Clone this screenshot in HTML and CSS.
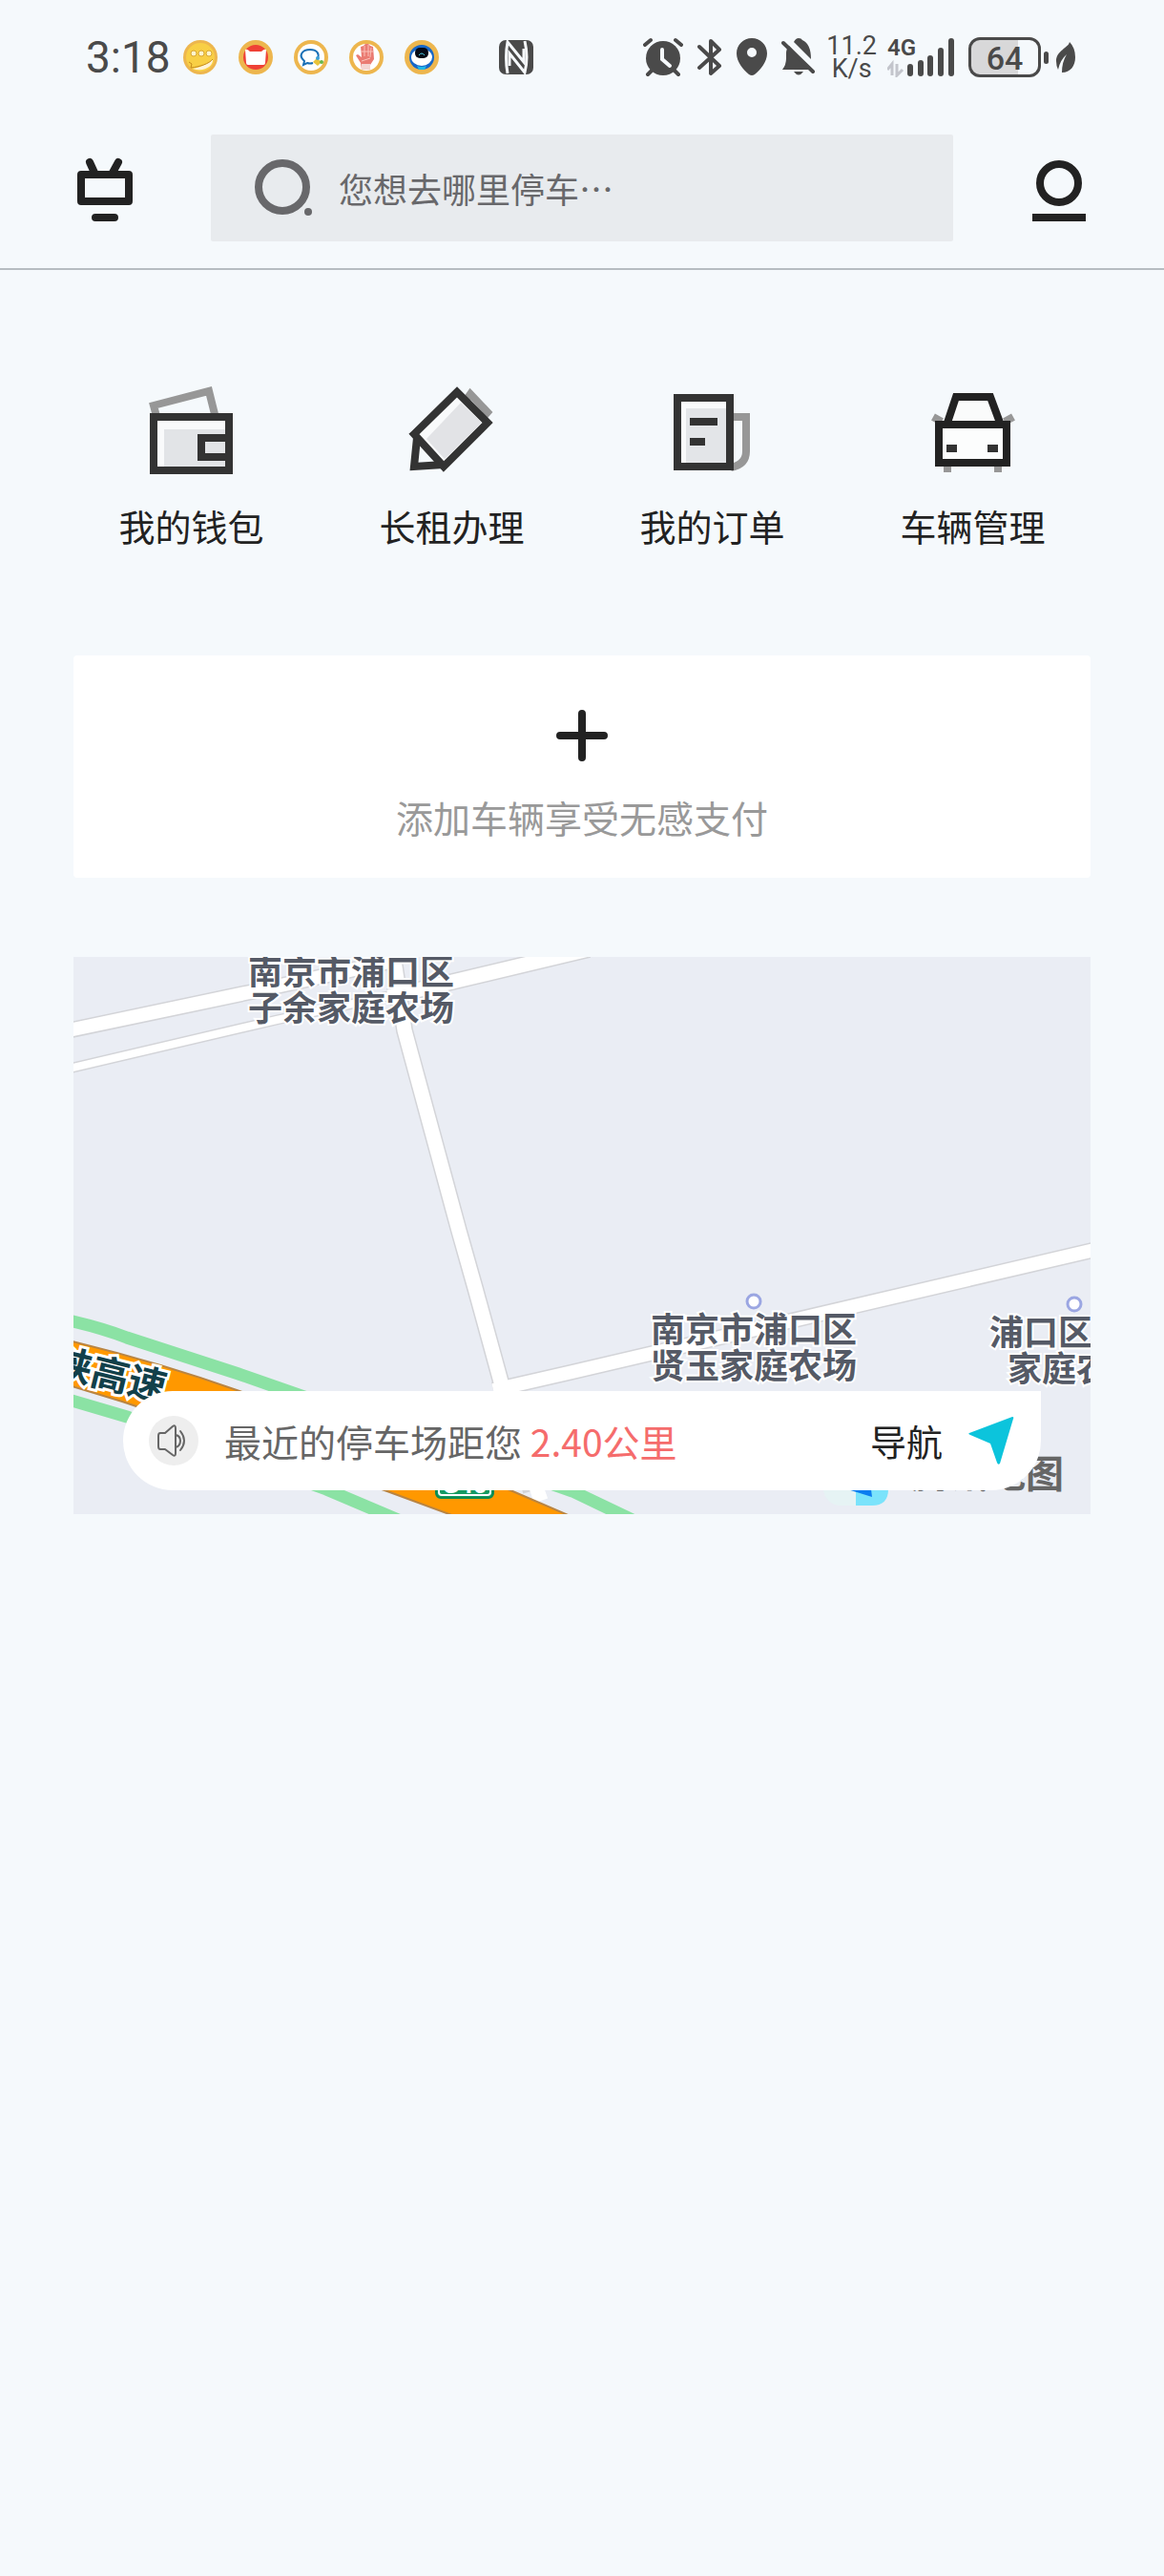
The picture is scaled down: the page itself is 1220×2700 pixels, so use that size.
FILE: index.html
```
<!DOCTYPE html>
<html lang="zh-CN">
<head>
    <meta charset="UTF-8">
    <meta name="viewport" content="width=device-width, initial-scale=1.0">
    <title>停车</title>
    <link rel="stylesheet" href="styles.css">
</head>
<body>
    <div class="status">
        <span class="time">3:18</span>
        <div class="notices">
            <svg width="36" height="36" viewBox="0 0 36 36">
                <circle cx="18" cy="18" r="18" fill="#edb64e"/>
                <circle cx="18" cy="18" r="15" fill="#f8cf45"/>
                <path d="M10 30C20 28 27 24 31 20C32 27 22 34 10 30Z" fill="#fff3d8"/>
                <path d="M6 23L9 25L8 29C17 28 27 25 31 20" fill="none" stroke="#c58a1c" stroke-width="1"/>
                <g fill="#fff6cc" stroke="#d9a632" stroke-width="1"><circle cx="11" cy="14" r="3"/><circle cx="19" cy="14" r="3"/><circle cx="27" cy="14" r="3"/></g>
            </svg>
            <svg width="36" height="36" viewBox="0 0 36 36">
                <circle cx="18" cy="18" r="18" fill="#edb64e"/>
                <circle cx="18" cy="18" r="13" fill="#ef4136"/>
                <path d="M7 10Q9 9 12 12H24Q27 9 29 10L28 24Q28 26 26 26H10Q8 26 8 24Z" fill="#fff"/>
            </svg>
            <svg width="36" height="36" viewBox="0 0 36 36">
                <circle cx="18" cy="18" r="18" fill="#edb64e"/>
                <circle cx="18" cy="18" r="14" fill="#fff"/>
                <path d="M20 24Q17 25 14 24L10 26L11 22C4 16 9 10 17 10C24 10 27 14 25 19" fill="none" stroke="#1a6fb5" stroke-width="2"/>
                <path d="M24 19L29 23L25 27L20 23Z" fill="#e9c33b"/>
                <circle cx="25" cy="19" r="2" fill="#3aa0d8"/><circle cx="29" cy="23" r="2" fill="#67b74b"/>
            </svg>
            <svg width="36" height="36" viewBox="0 0 36 36">
                <circle cx="18" cy="18" r="18" fill="#edb64e"/>
                <circle cx="18" cy="18" r="14" fill="#fff"/>
                <path d="M13 31L12 24L7 16L9 15L13 18L12 7L15 6L17 4L20 4L22 6L25 7L26 20L22 26L22 31Z" fill="#ea7b72"/>
                <path d="M16 6V17M20 5V17M23 8L22 18M12 12H25M13 22L22 19" stroke="#fbc1b8" stroke-width="1" fill="none"/>
                <path d="M13 25H22V31H13Z" fill="#f4d6d2"/>
            </svg>
            <svg width="36" height="36" viewBox="0 0 36 36">
                <circle cx="18" cy="18" r="18" fill="#edb64e"/>
                <circle cx="18" cy="18" r="13" fill="#1767c9"/>
                <ellipse cx="18" cy="18" rx="11" ry="9" fill="#fff"/>
                <rect x="11" y="8" width="14" height="11" rx="5" fill="#050a18"/>
                <path d="M15 16Q18 12 21 16" fill="none" stroke="#4fd0e8" stroke-width="1"/>
                <path d="M13 27Q18 29 23 27L21 31H15Z" fill="#20b8e8"/>
            </svg>
        </div>
        <svg class="nfc" width="36" height="36" viewBox="0 0 36 36">
            <rect width="36" height="36" rx="7" fill="#4a4a4a"/>
            <path d="M9 35Q6 18 9 2L26 23V9" fill="none" stroke="#f5f8fb" stroke-width="3"/>
            <path d="M27 1Q31 18 27 34L11 14V27" fill="none" stroke="#f5f8fb" stroke-width="3"/>
        </svg>
        <div class="signals">
            <svg width="42" height="42" viewBox="0 0 42 42">
                <g stroke="#4a4a4a" stroke-width="4" stroke-linecap="round">
                    <path d="M2 8L8 3M40 8L34 3M10 34L5 39M32 34L37 39"/>
                </g>
                <circle cx="21" cy="22" r="18" fill="#4a4a4a"/>
                <path d="M20 13V23L28 30" fill="none" stroke="#f5f8fb" stroke-width="4" stroke-linecap="round"/>
            </svg>
            <svg width="26" height="42" viewBox="0 0 26 42">
                <path d="M2 10L23 30L14 38V4L23 13L2 32" fill="none" stroke="#4a4a4a" stroke-width="4" stroke-linecap="round" stroke-linejoin="round"/>
            </svg>
            <svg width="32" height="42" viewBox="0 0 32 42">
                <path fill-rule="evenodd" d="M16 1C7 1 0 8 0 17C0 26 7 34 13 39Q16 41 19 39C25 34 32 26 32 17C32 8 25 1 16 1ZM16 11A5 5 0 1 1 16 21A5 5 0 1 1 16 11Z" fill="#4a4a4a"/>
            </svg>
            <svg width="36" height="42" viewBox="0 0 36 42">
                <path d="M1 34Q5 29 5 22V17Q5 12 8 9L31 34ZM13 5Q15 1 18 1Q21 1 22 3Q31 7 31 23ZM13 36H23Q18 43 13 36Z" fill="#4a4a4a"/>
                <path d="M2 6L33 36" stroke="#4a4a4a" stroke-width="4" stroke-linecap="round"/>
            </svg>
            <div class="speed">11.2<br>K/s</div>
            <div class="network">
                <span class="network-type">4G</span>
                <svg width="70" height="42" viewBox="0 0 70 42">
                    <path d="M0 34L5 28V40M10 28V40L16 34" fill="none" stroke="#c3c5cc" stroke-width="3"/>
                    <g fill="#4a4a4a">
                        <rect x="21" y="28" width="6" height="13" rx="3"/>
                        <rect x="32" y="24" width="6" height="17" rx="3"/>
                        <rect x="42" y="19" width="6" height="22" rx="3"/>
                        <rect x="53" y="11" width="6" height="30" rx="3"/>
                        <rect x="64" y="1" width="6" height="40" rx="3"/>
                    </g>
                </svg>
            </div>
            <div class="battery">64</div>
            <svg class="leaf" width="22" height="34" viewBox="0 0 22 34">
                <path d="M15 1C14 7 1 10 1 21Q1 26 3 30Q5 20 12 14Q7 22 7 33C16 33 21 26 21 17Q21 7 15 1Z" fill="#4a4a4a"/>
            </svg>
        </div>
    </div>

    <header class="topbar">
        <button class="icon-btn" aria-label="扫一扫">
            <svg width="60" height="72" viewBox="0 -4 60 72" fill="none" stroke="#222" stroke-width="8" stroke-linecap="round" stroke-linejoin="round">
                <rect x="5" y="18" width="50" height="28"/>
                <path d="M14 5L19 16M44 5L38 16M20 63H40"/>
            </svg>
        </button>
        <label class="search">
            <svg width="60" height="60" viewBox="0 0 60 60">
                <circle cx="29" cy="29" r="25" fill="none" stroke="#68686b" stroke-width="8"/>
                <circle cx="56" cy="55" r="4" fill="#68686b"/>
            </svg>
            <input type="text" placeholder="您想去哪里停车⋯" aria-label="搜索停车场">
        </label>
        <button class="icon-btn" aria-label="个人中心">
            <svg width="60" height="72" viewBox="0 -4 60 72" fill="none" stroke="#222" stroke-width="8">
                <circle cx="30" cy="27" r="20"/>
                <path d="M2 63H58"/>
            </svg>
        </button>
    </header>

    <nav class="menu">
        <a href="#">
            <svg width="96" height="96" viewBox="0 0 96 96" fill="none" stroke-width="8">
                <path d="M12 37L8 22L66 7L72 31" stroke="#979797"/>
                <rect x="8" y="34" width="79" height="56" stroke="#333" fill="#f9fafb"/>
                <path d="M19 47H83V86H19Z" fill="#e2e4e7"/>
                <path d="M83 56H58V76H83" stroke="#333"/>
            </svg>
            我的钱包
        </a>
        <a href="#">
            <svg width="96" height="96" viewBox="0 0 96 96" fill="none" stroke-width="8">
                <path d="M60 20L67 10L85 29L77 38" stroke="#979797"/>
                <path d="M8 52L53 8L85 40L39 86Z" stroke="#333" fill="#f9fafb"/>
                <path d="M57 19L79 40L40 78L21 57Z" fill="#e2e3e6"/>
                <path d="M11 56L8 86L39 84" stroke="#333"/>
            </svg>
            长租办理
        </a>
        <a href="#">
            <svg width="96" height="96" viewBox="0 0 96 96" fill="none" stroke-width="8">
                <path d="M66 34H83V70Q83 84 67 87" stroke="#979797"/>
                <rect x="11" y="14" width="55" height="72" stroke="#333" fill="#f9fafb"/>
                <path d="M20 25H62V82H20Z" fill="#e3e5e8"/>
                <path d="M24 39H53M24 60H40" stroke="#333"/>
            </svg>
            我的订单
        </a>
        <a href="#">
            <svg width="96" height="96" viewBox="0 0 96 96" fill="none" stroke-width="8">
                <path d="M6 34L15 39M90 34L81 39M21 84V92M74 84V92" stroke="#979797"/>
                <path d="M21 40L30 13H66L76 40" stroke="#222" fill="#fafbfb"/>
                <rect x="12" y="42" width="71" height="40" stroke="#222" fill="#fcfdfd"/>
                <path d="M20 67H31M63 67H74" stroke="#333"/>
            </svg>
            车辆管理
        </a>
    </nav>

    <main class="content">
        <button class="add-car">
            <svg width="56" height="56" viewBox="0 0 56 56" stroke="#222" stroke-width="8" stroke-linecap="round">
                <path d="M28 5V51M5 28H51"/>
            </svg>
            添加车辆享受无感支付
        </button>

        <section class="map">
            <svg class="map-view" viewBox="0 0 1066 584" preserveAspectRatio="xMidYMid slice">
                <!-- roads: grey edge first, white on top -->
                <g fill="none" stroke="#d3d4d8">
                    <path d="M-5 77L185 37L340 3" stroke-width="17"/>
                    <path d="M-5 117L213 66L340 39" stroke-width="11"/>
                    <path d="M330 42L540 -8" stroke-width="18"/>
                    <path d="M334 -10L347 77L404 287L421 347L452 460L480 560" stroke-width="18"/>
                    <path d="M440 454L523 435L1070 307" stroke-width="17"/>
                </g>
                <g fill="none" stroke="#fff">
                    <path d="M-5 77L185 37L340 3" stroke-width="14"/>
                    <path d="M-5 117L213 66L340 39" stroke-width="8"/>
                    <path d="M330 42L540 -8" stroke-width="15"/>
                    <path d="M334 -10L347 77L404 287L421 347L452 460L490 570" stroke-width="15"/>
                    <path d="M440 454L523 435L1070 307" stroke-width="14"/>
                </g>
                <!-- expressway -->
                <path d="M-5 402Q90 425 174 455L458 559L530 590H410L326 559L51 466L-5 449Z" fill="#ff9800" stroke="#b98442" stroke-width="2"/>
                <g fill="none" stroke="#8be2a4" stroke-width="13">
                    <path d="M-5 381Q30 389 56 399L173 437L233 458L523 560L590 592"/>
                    <path d="M-5 464L56 482L265 558L345 592"/>
                </g>
                <rect x="380" y="530" width="60" height="37" rx="5" fill="#149a63" stroke="#0c8a52" stroke-width="2"/>
                <rect x="383" y="533" width="54" height="31" rx="3" fill="none" stroke="#fff" stroke-width="2"/>
                <text class="badge" x="410" y="562">G40</text>
                <text class="road-name" x="-22" y="443" transform="rotate(14 0 436)">陕高速</text>
                <!-- places -->
                <g fill="#fff" stroke="#9ba6e2" stroke-width="3">
                    <circle cx="713" cy="361" r="7"/>
                    <circle cx="1049" cy="364" r="7"/>
                </g>
                <g class="place">
                    <text x="183" y="29">南京市浦口区</text>
                    <text x="183" y="67">子余家庭农场</text>
                    <text x="605" y="404">南京市浦口区</text>
                    <text x="605" y="442">贤玉家庭农场</text>
                    <text x="960" y="407">浦口区</text>
                    <text x="979" y="445">家庭农场</text>
                </g>
                <rect x="786" y="520" width="68" height="55" rx="18" fill="#e6f3f4"/>
                <path d="M820 520H854V558Q854 575 837 575H820Z" fill="#7be3fb"/>
                <path d="M808 557L837 566L835 550Z" fill="#0c7df0"/>
                <text class="brand" x="878" y="556">腾讯地图</text>
            </svg>
            <div class="nearest">
                <span class="speaker">
                    <svg width="36" height="36" viewBox="0 0 36 36" fill="none" stroke="#666" stroke-width="2" stroke-linejoin="round" stroke-linecap="round">
                        <path d="M4 10H9L17 3Q20 1 20 5V31Q20 35 17 33L9 27H4Q2 27 2 24V13Q2 10 4 10Z"/>
                        <path d="M20 12Q25 13 25 18Q25 24 20 25M25 8Q33 18 25 28"/>
                    </svg>
                </span>
                <p>最近的停车场距您 <em>2.40公里</em></p>
                <a href="#" class="go">
                    导航
                    <svg width="50" height="52" viewBox="0 0 50 52">
                        <path d="M2 18L47 1Q49 1 48 3L34 50Q32 52 31 49L24 29L3 20Q0 19 2 18Z" fill="#0cc4dc"/>
                    </svg>
                </a>
            </div>
        </section>
    </main>
</body>
</html>
```
FILE: styles.css
```
* {
    box-sizing: border-box;
}

body {
    margin: 0;
    min-height: 100vh;
    background-color: #f5f9fc;
    color: #222;
    font-family: "Noto Sans CJK SC", sans-serif;
    font-size: 38px;
    line-height: 56px;
}

svg {
    display: block;
    flex: none;
}

button {
    padding: 0;
    border: none;
    background: none;
    color: inherit;
    font: inherit;
    cursor: pointer;
}

a {
    color: inherit;
    text-decoration: none;
}

/* status bar */
.status {
    display: flex;
    align-items: center;
    height: 120px;
    padding: 0 92px 0 90px;
    color: #4a4a4a;
    font-family: Roboto, sans-serif;
}

.time {
    font-size: 46px;
}

.notices {
    display: flex;
    gap: 22px;
    margin-left: 13px;
}

.nfc {
    margin-left: 63px;
}

.signals {
    display: flex;
    align-items: center;
    gap: 15px;
    margin-left: auto;
}

.speed {
    margin: 0 -4px;
    font-size: 27px;
    line-height: 24px;
    text-align: center;
}

.network {
    position: relative;
}

.network-type {
    position: absolute;
    top: 0;
    left: 0;
    font-size: 24px;
    font-weight: 600;
    line-height: 22px;
}

.battery {
    position: relative;
    width: 76px;
    height: 42px;
    border: 3px solid #4a4a4a;
    border-radius: 12px;
    background: linear-gradient(to right, #d8d8d9 70%, transparent 70%);
    font-size: 34px;
    font-weight: 500;
    line-height: 38px;
    text-align: center;
}

.battery::after {
    content: "";
    position: absolute;
    top: 12px;
    right: -11px;
    width: 5px;
    height: 13px;
    border-radius: 3px;
    background-color: #4a4a4a;
}

/* top bar */
.topbar {
    display: flex;
    align-items: center;
    justify-content: space-between;
    padding: 21px 80px 28px;
    border-bottom: 2px solid #b6bcc1;
}

.search {
    display: flex;
    flex: 1;
    align-items: center;
    gap: 28px;
    height: 112px;
    margin: 0 81px;
    padding: 0 46px;
    border-radius: 2px;
    background-color: #e8ebee;
}

.search input {
    flex: 1;
    min-width: 0;
    padding: 0;
    border: none;
    outline: none;
    background: none;
    color: #68686b;
    font: inherit;
    font-size: 36px;
}

.search input::placeholder {
    color: #68686b;
    opacity: 1;
}

/* shortcuts */
.menu {
    display: grid;
    grid-template-columns: repeat(4, 1fr);
    padding: 120px 64px 0;
}

.menu a {
    display: flex;
    flex-direction: column;
    align-items: center;
    gap: 24px;
}

.content {
    padding: 108px 77px 0;
}

.add-car {
    display: flex;
    flex-direction: column;
    align-items: center;
    gap: 29px;
    width: 100%;
    padding: 56px 0 36px;
    border-radius: 4px;
    background-color: #fff;
    color: #999;
    font-size: 39px;
}

/* map */
.map {
    position: relative;
    margin-top: 83px;
    overflow: hidden;
    background-color: #eaedf4;
}

.map-view {
    width: 100%;
}

.place text {
    fill: #555a66;
    stroke: #fff;
    stroke-width: 4px;
    paint-order: stroke;
    font-size: 36px;
    font-weight: 700;
}

.road-name {
    fill: #12404a;
    stroke: #fff;
    stroke-width: 6px;
    paint-order: stroke;
    font-size: 40px;
    font-weight: 700;
}

.badge {
    fill: #fff;
    font-family: Roboto, sans-serif;
    font-size: 26px;
    font-weight: 700;
    text-anchor: middle;
}

.brand {
    fill: #666;
    font-size: 40px;
    font-weight: 700;
}

.nearest {
    position: absolute;
    right: 52px;
    bottom: 25px;
    left: 52px;
    display: flex;
    align-items: center;
    height: 104px;
    padding: 0 27px;
    border-radius: 52px 0 52px 52px;
    background-color: #fff;
}

.speaker {
    display: flex;
    align-items: center;
    justify-content: center;
    width: 52px;
    height: 52px;
    border-radius: 50%;
    background-color: #eee;
}

.nearest p {
    flex: 1;
    margin: 0 0 0 27px;
    color: #666;
    font-size: 39px;
}

.nearest em {
    color: #f56c6c;
    font-style: normal;
}

.go {
    display: flex;
    align-items: center;
    gap: 26px;
}
```
